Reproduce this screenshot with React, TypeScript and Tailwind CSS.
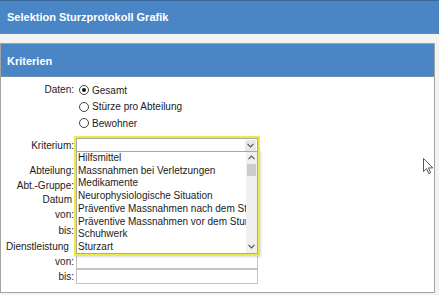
const options = [
  'Hilfsmittel',
  'Massnahmen bei Verletzungen',
  'Medikamente',
  'Neurophysiologische Situation',
  'Präventive Massnahmen nach dem Sturz',
  'Präventive Massnahmen vor dem Sturz',
  'Schuhwerk',
  'Sturzart'
];

const Radio = ({ checked, label }: { checked?: boolean; label: string }) => (
  <div className="flex items-center h-[16.5px]">
    <span className="ml-[3px] w-[10px] h-[10px] rounded-full border border-[#444] bg-white flex items-center justify-center">
      {checked && <span className="w-[4px] h-[4px] rounded-full bg-[#111]" />}
    </span>
    <span className="ml-[3px]">{label}</span>
  </div>
);

const Chevron = ({ up }: { up?: boolean }) => (
  <svg width="7" height="5" viewBox="0 0 7 5" className="text-[#555]">
    <path d={up ? 'M0.5 4.2 L3.5 1 L6.5 4.2' : 'M0.5 0.8 L3.5 4 L6.5 0.8'} fill="none" stroke="currentColor" strokeWidth="1.1" />
  </svg>
);

const App = () => {
  return (
    <div className="relative w-[439px] h-[295px] overflow-hidden bg-[#f3f3f3] font-['Liberation_Sans',Arial,sans-serif] text-[10px] text-[#1b1b1b]">
      {/* page title */}
      <div className="h-[34px] bg-[#4a86c5] border-t border-[#3a6796] border-b border-b-[#5a88b8] pl-[7px] flex items-center text-[11px] font-bold text-white">
        Selektion Sturzprotokoll Grafik
      </div>

      {/* Kriterien panel */}
      <div className="mt-[9px] w-[435px] bg-white border border-[#a3a3a3]">
        <div className="h-[33px] bg-[#4a86c5] border-b border-[#6f8fb0] pl-[6px] pt-[2px] flex items-center text-[11px] font-bold text-white">
          Kriterien
        </div>

        <div className="grid grid-cols-[73px_182px] gap-x-[2px] pt-[5px] pb-[8px]">
          {/* Daten */}
          <div className="text-right leading-[16.5px]">Daten:</div>
          <div>
            <Radio checked label="Gesamt" />
            <Radio label="Stürze pro Abteilung" />
            <Radio label="Bewohner" />
          </div>

          {/* Kriterium with open list */}
          <div className="text-right mt-[6px] leading-[16px]">Kriterium:</div>
          <div className="mt-[6px] relative">
            <div className="-ml-[2px] -mt-[2px] w-[186px] border-2 border-b-0 border-[#efe84a]">
              <div className="h-[15px] bg-white border border-b-0 border-[#a8a8a8] flex justify-end">
                <div className="w-[11px] h-[12px] mt-[1px] mr-[1px] bg-[#e9e9e9] flex items-center justify-center">
                  <Chevron />
                </div>
              </div>
            </div>
            <div className="absolute z-10 top-[13px] -left-[2px] w-[186px] border-2 border-t-0 border-[#efe84a] shadow-[1px_1px_2px_rgba(0,0,0,0.15)]">
              <div className="relative h-[103px] bg-white border border-[#a8a8a8]">
                <div className="w-[169px] overflow-hidden whitespace-nowrap pt-[0.5px]">
                  {options.map((o) => (
                    <div key={o} className="pl-[1px] leading-[12.7px]">{o}</div>
                  ))}
                </div>
                <div className="absolute right-0 top-0 bottom-0 w-[11px] bg-[#f0f0f0] flex flex-col items-center">
                  <div className="h-[12px] flex items-center"><Chevron up /></div>
                  <div className="w-[9px] h-[12px] bg-[#cdcdcd]" />
                  <div className="flex-1" />
                  <div className="h-[12px] flex items-center"><Chevron /></div>
                </div>
              </div>
            </div>
          </div>

          {/* rows under the list */}
          <div className="text-right mt-[9px] h-[15px] leading-[15px]">Abteilung:</div>
          <div className="mt-[9px] h-[15px]" />
          <div className="text-right h-[15px] leading-[15px]">Abt.-Gruppe:</div>
          <div className="h-[15px]" />
          <div className="text-right h-[14px] leading-[14px] pr-[2px]">Datum</div>
          <div className="h-[14px]" />
          <div className="text-right h-[16px] leading-[16px]">von:</div>
          <div className="h-[16px]" />
          <div className="text-right h-[16px] leading-[16px]">bis:</div>
          <div className="h-[16px]" />
          <div className="pl-[5px] h-[15px] leading-[15px] whitespace-nowrap">Dienstleistung</div>
          <div className="h-[15px]" />
          <div className="text-right h-[15px] leading-[15px]">von:</div>
          <div className="h-[15px] border border-[#c3c3c3] bg-white" />
          <div className="text-right h-[15px] leading-[15px]">bis:</div>
          <div className="h-[15px] border border-[#c3c3c3] bg-white" />
        </div>
      </div>

      {/* mouse pointer */}
      <svg className="absolute left-[423px] top-[158px]" width="11" height="17" viewBox="0 0 11 17">
        <path d="M0.5 0.5 L0.5 13.5 L3.6 10.6 L5.8 15.6 L7.6 14.8 L5.5 9.9 L9.8 9.9 Z" fill="#fff" stroke="#555" strokeWidth="1" strokeLinejoin="round" />
      </svg>
    </div>
  );
};

export default App;
